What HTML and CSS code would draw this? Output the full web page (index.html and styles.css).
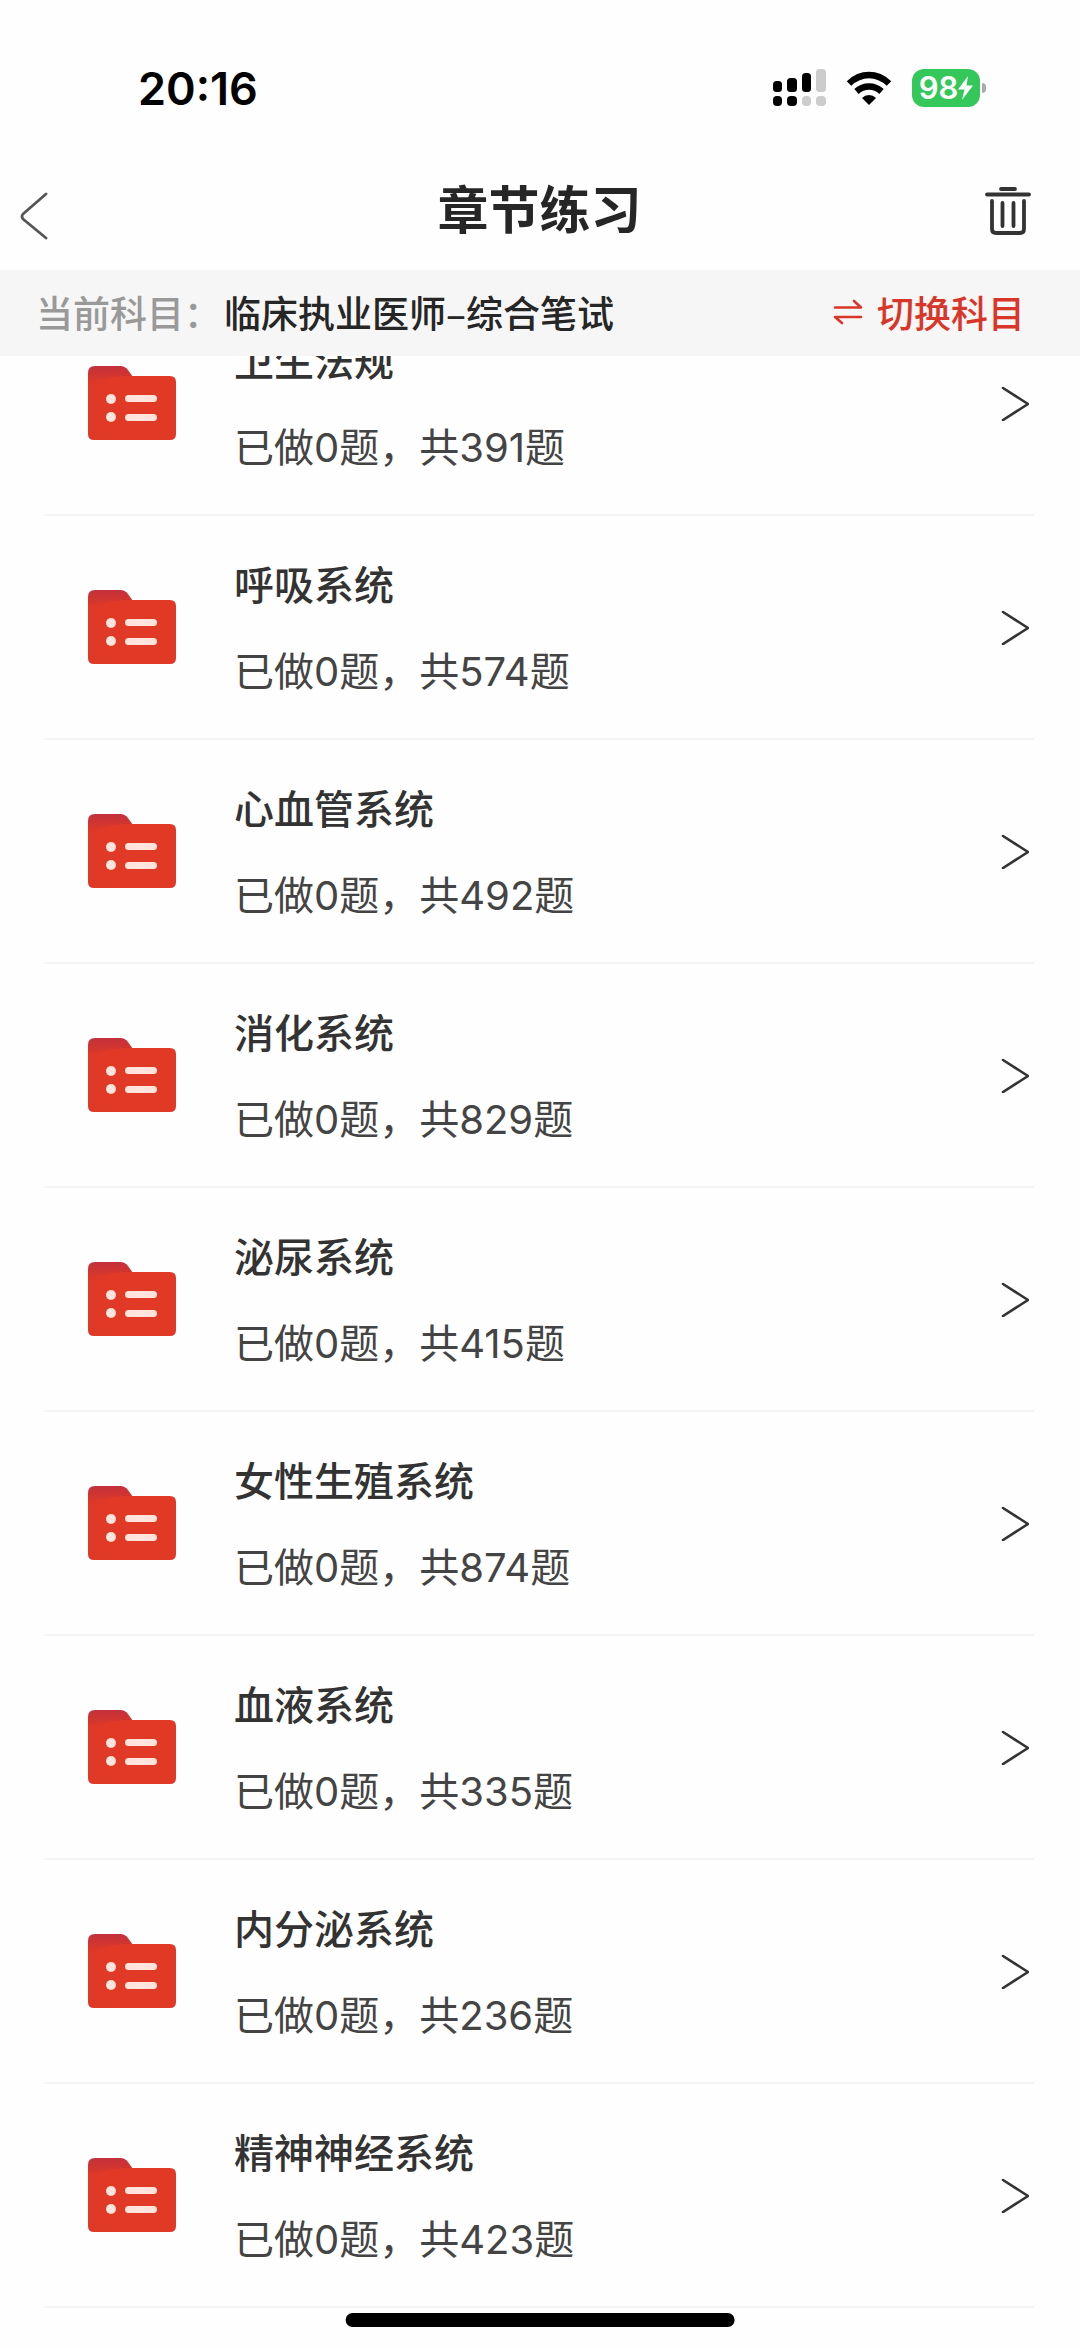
FILE: index.html
```
<!DOCTYPE html>
<html lang="zh-CN">

<head>
    <meta charset="UTF-8" />
    <meta name="viewport" content="width=device-width, initial-scale=1.0" />
    <title>章节练习</title>
    <link rel="stylesheet" href="styles.css">
</head>

<body>
    <!-- icons used more than once -->
    <svg class="sprite" width="0" height="0">
        <symbol id="folder" viewBox="0 0 88 74">
            <linearGradient id="tab" x1="0" y1="0" x2="0" y2="1">
                <stop offset="0" stop-color="#c2303c" />
                <stop offset="0.6" stop-color="#e03a26" />
            </linearGradient>
            <path fill="url(#tab)" d="M7 0H32Q37 0 40 4L45 11V30H0V7Q0 0 7 0Z" />
            <path fill="#e03a26" d="M0 18Q20 10 42 10H82Q88 10 88 16V68Q88 74 82 74H6Q0 74 0 68Z" />
            <g fill="#ffe3dc">
                <circle cx="23" cy="33" r="5" />
                <circle cx="23" cy="51" r="5" />
                <rect x="37" y="29" width="32" height="7" rx="3.5" />
                <rect x="37" y="48" width="32" height="7" rx="3.5" />
            </g>
        </symbol>
        <symbol id="arrow" viewBox="0 0 28 36">
            <path fill="none" stroke="#333" stroke-width="2.6" stroke-linecap="round" stroke-linejoin="round" d="M2 3L27 19L2 35" />
        </symbol>
    </svg>

    <header class="header">
        <div class="status-bar">
            <span class="time">20:16</span>
            <div class="status-icons">
                <svg class="signal" viewBox="0 0 53 38">
                    <rect x="0" y="12" width="9" height="11" rx="3.5" />
                    <rect x="14" y="9" width="10" height="14" rx="3.5" />
                    <rect x="29" y="4" width="9" height="19" rx="3.5" />
                    <rect x="43" y="0" width="10" height="23" rx="3.5" fill="#ccc" />
                    <rect x="0" y="27" width="9" height="10" rx="4" />
                    <rect x="14" y="27" width="10" height="10" rx="4" />
                    <rect x="29" y="27" width="9" height="10" rx="4" fill="#ccc" />
                    <rect x="43" y="27" width="10" height="10" rx="4" fill="#ccc" />
                </svg>
                <svg class="wifi" viewBox="0 0 46 34">
                    <path fill="none" stroke="#000" stroke-width="6.5" d="M3 12.5Q12 4 23 4T43 12.5" />
                    <path fill="none" stroke="#000" stroke-width="6.5" d="M10.500 20.500Q16 15.500 23 15.500T35.500 20.500" />
                    <path d="M23 34L16 27Q19 24 23 24T30 27Z" />
                </svg>
                <div class="battery">
                    <span>98</span>
                    <svg class="bolt" viewBox="0 0 15 24">
                        <path fill="#fff" d="M10 0L0 13.500H6.500L4 24L15 9.500H8.500Z" />
                    </svg>
                </div>
                <i class="battery-tip"></i>
            </div>
        </div>

        <div class="nav-bar">
            <button class="icon-btn" type="button" aria-label="返回">
                <svg class="back" viewBox="0 0 28 48">
                    <path fill="none" stroke="#555" stroke-width="2.8" stroke-linecap="round" stroke-linejoin="round" d="M26 2L3 22Q1 24.500 3 27L26 46" />
                </svg>
            </button>
            <h1>章节练习</h1>
            <button class="icon-btn" type="button" aria-label="清空">
                <svg class="trash" viewBox="0 0 46 48">
                    <g fill="none" stroke="#333" stroke-width="3.8" stroke-linecap="round" stroke-linejoin="round">
                        <path d="M16 2H30" />
                        <path d="M2 7.500H44" />
                        <path d="M7 14V42Q7 46 11 46H35Q39 46 39 42V14" />
                        <path d="M17.500 16V39" />
                        <path d="M28.500 16V39" />
                    </g>
                </svg>
            </button>
        </div>

        <div class="subject-bar">
            <span class="label">当前科目：</span>
            <span class="subject">临床执业医师–综合笔试</span>
            <button class="switch" type="button">
                <svg viewBox="0 0 30 26">
                    <path fill="none" stroke="#d9362a" stroke-width="2.6" stroke-linecap="round" stroke-linejoin="round" d="M2 8.500H28L21 2M28 18H2L9 24" />
                </svg>
                切换科目
            </button>
        </div>
    </header>

    <main>
        <ul class="chapters">
            <li><a href="#">
                <svg class="folder"><use href="#folder" /></svg>
                <div class="info">
                    <h2>卫生法规</h2>
                    <p>已做0题，共391题</p>
                </div>
                <svg class="arrow"><use href="#arrow" /></svg>
            </a></li>
            <li><a href="#">
                <svg class="folder"><use href="#folder" /></svg>
                <div class="info">
                    <h2>呼吸系统</h2>
                    <p>已做0题，共574题</p>
                </div>
                <svg class="arrow"><use href="#arrow" /></svg>
            </a></li>
            <li><a href="#">
                <svg class="folder"><use href="#folder" /></svg>
                <div class="info">
                    <h2>心血管系统</h2>
                    <p>已做0题，共492题</p>
                </div>
                <svg class="arrow"><use href="#arrow" /></svg>
            </a></li>
            <li><a href="#">
                <svg class="folder"><use href="#folder" /></svg>
                <div class="info">
                    <h2>消化系统</h2>
                    <p>已做0题，共829题</p>
                </div>
                <svg class="arrow"><use href="#arrow" /></svg>
            </a></li>
            <li><a href="#">
                <svg class="folder"><use href="#folder" /></svg>
                <div class="info">
                    <h2>泌尿系统</h2>
                    <p>已做0题，共415题</p>
                </div>
                <svg class="arrow"><use href="#arrow" /></svg>
            </a></li>
            <li><a href="#">
                <svg class="folder"><use href="#folder" /></svg>
                <div class="info">
                    <h2>女性生殖系统</h2>
                    <p>已做0题，共874题</p>
                </div>
                <svg class="arrow"><use href="#arrow" /></svg>
            </a></li>
            <li><a href="#">
                <svg class="folder"><use href="#folder" /></svg>
                <div class="info">
                    <h2>血液系统</h2>
                    <p>已做0题，共335题</p>
                </div>
                <svg class="arrow"><use href="#arrow" /></svg>
            </a></li>
            <li><a href="#">
                <svg class="folder"><use href="#folder" /></svg>
                <div class="info">
                    <h2>内分泌系统</h2>
                    <p>已做0题，共236题</p>
                </div>
                <svg class="arrow"><use href="#arrow" /></svg>
            </a></li>
            <li><a href="#">
                <svg class="folder"><use href="#folder" /></svg>
                <div class="info">
                    <h2>精神神经系统</h2>
                    <p>已做0题，共423题</p>
                </div>
                <svg class="arrow"><use href="#arrow" /></svg>
            </a></li>
        </ul>
    </main>

    <div class="home-indicator"></div>
</body>

</html>
```
FILE: styles.css
```
* {
    box-sizing: border-box;
}

body {
    margin: 0;
    background-color: #fefefe;
    color: #333;
    font-family: Inter, 'Noto Sans CJK SC', sans-serif;
}

h1,
h2,
p,
ul {
    margin: 0;
    padding: 0;
}

svg {
    display: block;
    flex-shrink: 0;
}

button {
    border: none;
    padding: 0;
    background: none;
    font-family: inherit;
    cursor: pointer;
}

.sprite {
    position: absolute;
}

/* header */
.header {
    position: sticky;
    top: 0;
    z-index: 2;
    background-color: #fefefe;
}

.status-bar {
    display: flex;
    justify-content: space-between;
    align-items: center;
    height: 152px;
    padding: 24px 94px 0 138px;
}

.time {
    color: #000;
    font-size: 45px;
    font-weight: 600;
}

.status-icons {
    display: flex;
    align-items: center;
}

.signal {
    width: 53px;
    height: 38px;
}

.wifi {
    width: 46px;
    height: 34px;
    margin: 0 20px;
}

.battery {
    display: flex;
    justify-content: center;
    align-items: center;
    width: 68px;
    height: 38px;
    border-radius: 12px;
    background-color: #34c759;
    color: #fff;
    font-size: 31px;
    font-weight: 600;
    line-height: 38px;
}

.bolt {
    width: 15px;
    height: 24px;
}

.battery-tip {
    width: 4px;
    height: 10px;
    margin-left: 2px;
    border-radius: 0 5px 5px 0;
    background-color: #aaa;
}

.nav-bar {
    display: grid;
    grid-template-columns: 1fr auto 1fr;
    align-items: center;
    height: 118px;
    padding: 0 49px 0 20px;
}

.nav-bar h1 {
    padding-left: 28px;
    color: #262626;
    font-size: 51px;
    font-weight: 700;
    line-height: 60px;
}

.icon-btn {
    display: flex;
    justify-self: start;
}

.icon-btn:last-child {
    justify-self: end;
}

.back {
    width: 28px;
    height: 48px;
    margin-top: 10px;
}

.trash {
    width: 46px;
    height: 48px;
}

.subject-bar {
    display: flex;
    align-items: center;
    height: 86px;
    padding: 0 55px 2px 36px;
    background-color: #f6f6f6;
    font-family: 'Noto Sans CJK SC', sans-serif;
    font-size: 37px;
    font-weight: 500;
}

.label {
    color: #999;
}

.subject {
    margin-left: 3px;
    color: #262626;
}

.switch {
    display: flex;
    align-items: center;
    gap: 14px;
    margin-left: auto;
    color: #d9362a;
    font-size: 37px;
    font-weight: 500;
}

.switch svg {
    width: 30px;
    height: 26px;
}

/* chapter list, scrolled partly under the header */
.chapters {
    margin: -64px 46px 0 44px;
    list-style: none;
}

.chapters li {
    border-bottom: 2px solid #f5f5f5;
}

.chapters a {
    display: flex;
    align-items: center;
    height: 222px;
    padding: 0 5px 0 44px;
    color: inherit;
    text-decoration: none;
}

.folder {
    width: 88px;
    height: 74px;
}

.info {
    flex: 1;
    margin-left: 58px;
    padding-top: 4px;
}

.info h2 {
    margin-bottom: 30px;
    font-size: 40px;
    font-weight: 500;
    line-height: 56px;
}

.info p {
    color: #444;
    font-size: 40px;
    font-weight: 400;
    line-height: 56px;
}

.arrow {
    width: 28px;
    height: 36px;
}

.home-indicator {
    position: fixed;
    bottom: 21px;
    left: 50%;
    z-index: 3;
    width: 36%;
    height: 14px;
    border-radius: 7px;
    background-color: #000;
    transform: translateX(-50%);
}
```
